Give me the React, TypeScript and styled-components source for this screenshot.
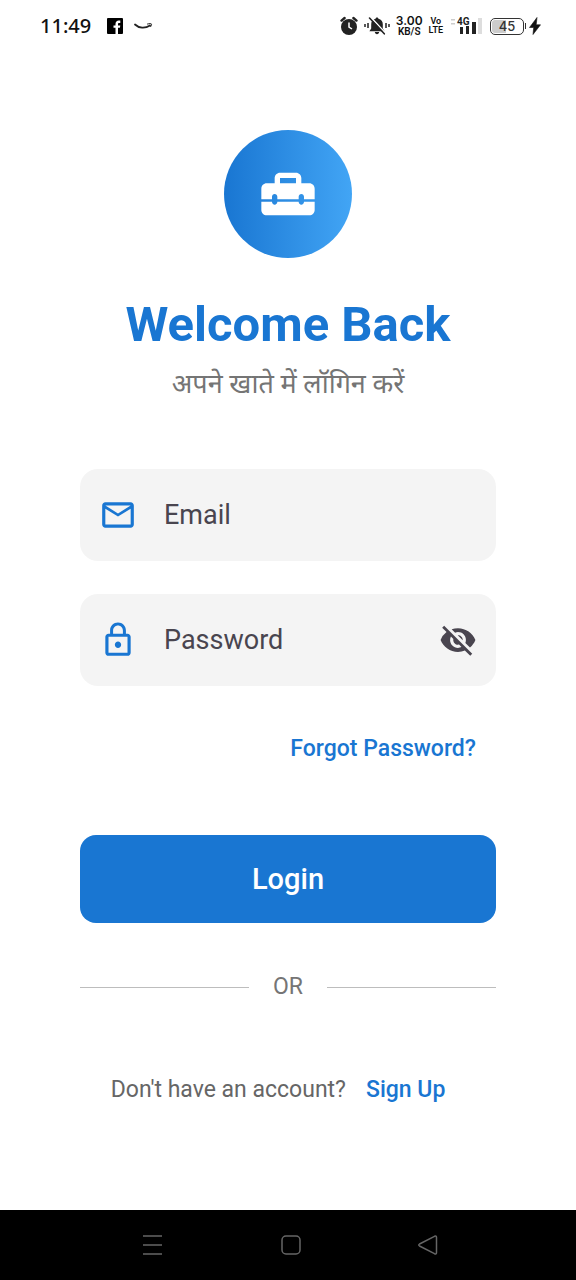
import React, { useState } from "react";
import styled, { createGlobalStyle } from "styled-components";
import { MdLockOutline, MdMailOutline, MdVisibility, MdVisibilityOff } from "react-icons/md";

const BLUE = "#1976d2";

const GlobalStyle = createGlobalStyle`
  *, *::before, *::after { box-sizing: border-box; }
  body { margin: 0; background: #fff; font-family: Roboto, "Noto Sans", sans-serif; }
  button, input { font: inherit; margin: 0; }
`;

const Screen = styled.div`
  display: flex;
  flex-direction: column;
  min-height: 100vh;
`;

const StatusBar = styled.header`
  display: flex;
  align-items: center;
  justify-content: space-between;
  height: 52px;
  padding: 0 35px 0 40px;
  color: #111;
`;

const StatusGroup = styled.div<{ $gap: number }>`
  display: flex;
  align-items: center;
  gap: ${(p) => p.$gap}px;

  svg { display: block; }
`;

const Clock = styled.time`
  margin-right: 5px;
  font: 500 20px/24px "Noto Sans", sans-serif;
`;

const Stack = styled.div`
  display: flex;
  flex-direction: column;
  align-items: center;
`;

const Tiny = styled.span<{ $size: number; $wide?: boolean }>`
  font-family: ${(p) => (p.$wide ? "Inter" : "Roboto")}, sans-serif;
  font-size: ${(p) => p.$size}px;
  font-weight: 600;
  line-height: ${(p) => p.$size}px;
`;

const Battery = styled.span`
  display: flex;
  align-items: center;

  &::after {
    content: "";
    width: 1px;
    height: 6px;
    margin-left: 1px;
    background: #333;
  }
`;

const BatteryCell = styled.span`
  width: 34px;
  height: 17px;
  border: 1px solid #333;
  border-radius: 5px;
  background: linear-gradient(to right, #ccc 45%, #fff 45%) content-box;
  padding: 1px;
  color: #333;
  font: 500 13px/13px Inter, sans-serif;
  text-align: center;
`;

const Main = styled.main`
  display: flex;
  flex: 1;
  flex-direction: column;
  align-items: stretch;
  padding: 78px 80px 80px;
`;

const Logo = styled.div`
  display: grid;
  place-items: center;
  align-self: center;
  width: 128px;
  height: 128px;
  border-radius: 50%;
  background: linear-gradient(to right, #1976d2, #42a5f5);
`;

const Title = styled.h1`
  margin: 39px 0 15px;
  color: ${BLUE};
  font-size: 49px;
  font-weight: 700;
  line-height: 56px;
  text-align: center;
  white-space: nowrap;
`;

const Subtitle = styled.p`
  margin: 0;
  color: #757575;
  font-size: 27px;
  line-height: 32px;
  text-align: center;
`;

const Form = styled.form`
  display: flex;
  flex-direction: column;
  margin-top: 69px;
`;

const Fields = styled.div`
  display: flex;
  flex-direction: column;
  gap: 33px;
`;

const Field = styled.div`
  display: flex;
  align-items: center;
  gap: 27px;
  height: 92px;
  padding: 0 19px;
  border-radius: 18px;
  background: #f4f4f4;
`;

const FieldLabel = styled.label`
  display: flex;
  color: ${BLUE};
`;

const TextInput = styled.input`
  flex: 1;
  min-width: 0;
  height: 48px;
  padding: 0;
  border: 0;
  outline: 0;
  background: transparent;
  color: #222;
  font-size: 27px;

  &::placeholder { color: #49454f; opacity: 1; }
`;

const IconButton = styled.button`
  display: flex;
  padding: 0;
  border: 0;
  background: none;
  color: #49454f;
  cursor: pointer;
`;

const TextLink = styled.a`
  display: flex;
  align-items: center;
  height: 77px;
  padding: 0 20px;
  color: ${BLUE};
  font-size: 23px;
  font-weight: 500;
  text-decoration: none;
`;

const ForgotRow = styled.div`
  display: flex;
  justify-content: flex-end;
  margin: 24px 0 48px;
`;

const LoginButton = styled.button`
  height: 88px;
  border: 0;
  border-radius: 16px;
  background: ${BLUE};
  color: #fff;
  font-size: 29px;
  font-weight: 500;
  cursor: pointer;
`;

const Divider = styled.div`
  display: flex;
  align-items: center;
  gap: 24px;
  margin: 48px 0;
  color: #757575;
  font-size: 23px;
  line-height: 32px;

  &::before,
  &::after {
    content: "";
    flex: 1;
    height: 1px;
    background: #bdbdbd;
  }
`;

const SignUpRow = styled.div`
  display: flex;
  align-items: center;
  justify-content: center;
  color: #666;
  font-size: 23px;
  white-space: nowrap;
`;

const NavBar = styled.nav`
  display: flex;
  align-items: center;
  justify-content: space-between;
  height: 70px;
  padding: 0 137px 0 142px;
  background: #000;
  color: #666;
`;

const NavButton = styled(IconButton)`
  color: inherit;
`;

const ToolboxIcon = () => (
  <svg width="64" height="64" viewBox="0 0 24 24" fill="#fff" aria-hidden="true">
    <path
      fillRule="evenodd"
      d="M20 8h-3V6c0-1.100-.9-2-2-2H9c-1.100 0-2 .9-2 2v2H4c-1.100 0-2 .9-2 2v4h4v-1c0-.55.45-1 1-1s1 .45 1 1v1h8v-1c0-.55.45-1 1-1s1 .45 1 1v1h4v-4c0-1.100-.9-2-2-2zM9 6h6v2H9z"
    />
    <path d="M18 14.900c0 .6-.45 1.100-1 1.100s-1-.5-1-1.100H8c0 .6-.45 1.100-1 1.100s-1-.5-1-1.100H2V18c0 1.100.9 2 2 2h16c1.100 0 2-.9 2-2v-3.100z" />
  </svg>
);

const FacebookIcon = () => (
  <svg width="16" height="16" viewBox="0 0 16 16" aria-hidden="true">
    <rect width="16" height="16" rx="1" fill="#000" />
    <path d="M8.500 16V9.800H6.500V7.400h2V6c0-2.200 1.300-3.400 3.300-3.400h1.500V5h-1.200c-.8 0-1.100.4-1.100 1.200v1.200h2.300l-.4 2.400H11V16z" fill="#fff" />
  </svg>
);

const SmileIcon = () => (
  <svg width="19" height="10" viewBox="0 0 19 10" fill="none" stroke="#222" strokeLinecap="round" aria-hidden="true">
    <path d="M1 3.500c4 3.800 10 4.200 15 1" strokeWidth="1.800" />
    <path d="M13.500 3c2-.5 3.500-.5 4 0 .2.700-.2 1.700-.9 2.700" strokeWidth="1" />
  </svg>
);

const AlarmIcon = () => (
  <svg width="18" height="20" viewBox="0 0 18 20" fill="none" aria-hidden="true">
    <circle cx="9" cy="11" r="8" fill="#222" />
    <path d="M1.500 4.600 4.600 2M16.500 4.600 13.400 2" stroke="#222" strokeWidth="2.400" strokeLinecap="round" />
    <path d="M9 6.500V11l3 2" stroke="#fff" strokeWidth="1.500" />
  </svg>
);

const MutedBellIcon = () => (
  <svg width="26" height="20" viewBox="0 0 26 20" fill="none" aria-hidden="true">
    <path d="M13 1.500c.9 0 1.400.6 1.400 1.300 2.900.7 4.400 2.700 4.400 5.400v4.300l1.800 2.800H5.400l1.800-2.800V8.200c0-2.700 1.500-4.700 4.400-5.400 0-.7.500-1.300 1.400-1.300zM10.800 16h4.400c-.2 1.400-1 2.200-2.200 2.200s-2-.8-2.200-2.200z" fill="#222" />
    <path d="M7 1.500 21.500 17" stroke="#fff" strokeWidth="1.500" />
    <path d="M5.500 2 20.300 17.800" stroke="#222" strokeWidth="1.600" strokeLinecap="round" />
    <path d="M1 8v3M4 7v5M22 7v5M25 8v3" stroke="#222" strokeWidth="1.500" />
  </svg>
);

const SignalIcon = () => (
  <svg width="31" height="20" viewBox="0 0 31 20" overflow="visible" aria-hidden="true">
    <path d="M0 3h4v1.500H0zM0 7h4v1.500H0z" fill="#ccc" />
    <text x="6" y="9" fontFamily="Roboto, sans-serif" fontSize="10" fontWeight="700" fill="#222">4G</text>
    <path d="M9 11h3v7H9zM15 10h3v8h-3zM21 6h4v12h-4z" fill="#222" />
    <path d="M27 2h4v16h-4z" fill="#ddd" />
  </svg>
);

const BoltIcon = () => (
  <svg width="12" height="18" viewBox="0 0 12 18" fill="#111" aria-hidden="true">
    <path d="M8 .5.500 10.500h4.200L4 17.500l7.500-9.700H7.200z" stroke="#111" strokeWidth=".6" />
  </svg>
);

export default function App() {
  const [visible, setVisible] = useState(false);

  return (
    <Screen>
      <GlobalStyle />
      <StatusBar>
        <StatusGroup $gap={11}>
          <Clock>11:49</Clock>
          <FacebookIcon />
          <SmileIcon />
        </StatusGroup>
        <StatusGroup $gap={8}>
          <StatusGroup $gap={6}>
            <AlarmIcon />
            <MutedBellIcon />
            <Stack>
              <Tiny $size={12} $wide>3.00</Tiny>
              <Tiny $size={10}>KB/S</Tiny>
            </Stack>
            <Stack>
              <Tiny $size={9}>Vo</Tiny>
              <Tiny $size={9}>LTE</Tiny>
            </Stack>
          </StatusGroup>
          <SignalIcon />
          <StatusGroup $gap={3}>
            <Battery>
              <BatteryCell>45</BatteryCell>
            </Battery>
            <BoltIcon />
          </StatusGroup>
        </StatusGroup>
      </StatusBar>

      <Main>
        <Logo>
          <ToolboxIcon />
        </Logo>
        <Title>Welcome Back</Title>
        <Subtitle lang="hi">अपने खाते में लॉगिन करें</Subtitle>

        <Form onSubmit={(e) => e.preventDefault()}>
          <Fields>
            <Field>
              <FieldLabel htmlFor="email" aria-label="Email">
                <MdMailOutline size={38} />
              </FieldLabel>
              <TextInput id="email" type="email" placeholder="Email" />
            </Field>
            <Field>
              <FieldLabel htmlFor="password" aria-label="Password">
                <MdLockOutline size={38} />
              </FieldLabel>
              <TextInput id="password" type={visible ? "text" : "password"} placeholder="Password" />
              <IconButton
                type="button"
                aria-label={visible ? "Hide password" : "Show password"}
                onClick={() => setVisible(!visible)}
              >
                {visible ? <MdVisibility size={38} /> : <MdVisibilityOff size={38} />}
              </IconButton>
            </Field>
          </Fields>
          <ForgotRow>
            <TextLink href="#forgot">Forgot Password?</TextLink>
          </ForgotRow>
          <LoginButton type="submit">Login</LoginButton>
        </Form>

        <Divider>OR</Divider>

        <SignUpRow>
          <span>Don't have an account?</span>
          <TextLink href="#signup">Sign Up</TextLink>
        </SignUpRow>
      </Main>

      <NavBar aria-label="System">
        <NavButton type="button" aria-label="Recent apps">
          <svg width="22" height="22" viewBox="0 0 22 22" fill="none" stroke="currentColor" strokeWidth="1.500">
            <path d="M1 2h19M1 11h19M1 20h19" />
          </svg>
        </NavButton>
        <NavButton type="button" aria-label="Home">
          <svg width="22" height="22" viewBox="0 0 22 22" fill="none" stroke="currentColor" strokeWidth="1.500">
            <rect x="2" y="2" width="18" height="18" rx="4" />
          </svg>
        </NavButton>
        <NavButton type="button" aria-label="Back">
          <svg width="22" height="22" viewBox="0 0 22 22" fill="none" stroke="currentColor" strokeWidth="1.500" strokeLinejoin="round">
            <path d="M2.500 10 17.500 2.300Q19.500 1.500 19.500 3.500v15q0 2-2 1.200L2.500 12q-1.500-1 0-2z" />
          </svg>
        </NavButton>
      </NavBar>
    </Screen>
  );
}
